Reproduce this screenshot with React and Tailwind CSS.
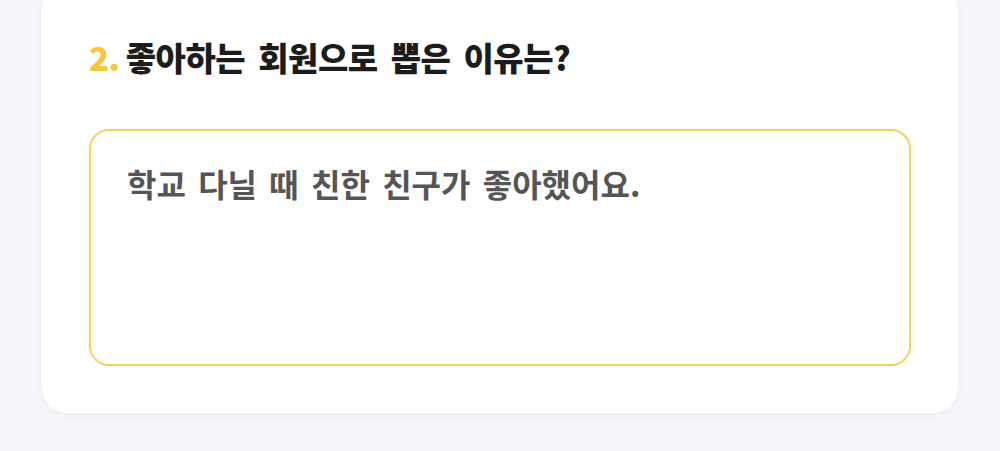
export default function App() {
  return (
    <div className="min-h-[451px] bg-[#f5f6f9] px-[42px] pb-[38px] font-['Noto_Sans_CJK_KR','Noto_Sans',sans-serif]">
      <div className="-mt-4 rounded-[26px] bg-white px-[47px] pt-[51px] pb-[47px] shadow-[0_2px_10px_rgba(30,40,80,0.04)]">
        <h2 className="flex items-center text-[33px] leading-[44px] font-extrabold tracking-[-0.5px] text-[#1c1c1c] [word-spacing:6px]">
          <span className="mr-[6px] text-[#f5c73a]">2.</span>
          좋아하는 회원으로 뽑은 이유는?
        </h2>

        <div className="mt-[50px] h-[237px] rounded-[20px] border-2 border-[#f1d45e] px-[36px] pt-[32px]">
          <p className="text-[32px] leading-[40px] font-bold text-[#555555] [word-spacing:5px]">
            학교 다닐 때 친한 친구가 좋아했어요.
          </p>
        </div>
      </div>
    </div>
  )
}
